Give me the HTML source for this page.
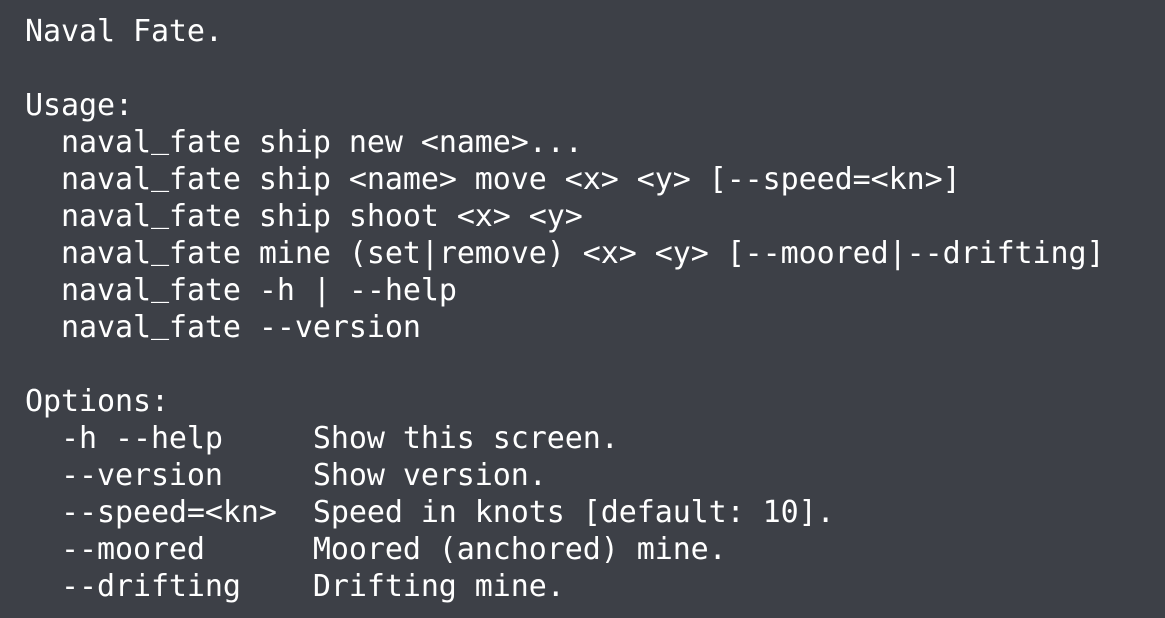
<!DOCTYPE html>
<html><head><style>
html,body{margin:0;padding:0;background:#3d4047;width:1165px;height:618px;overflow:hidden}
pre{margin:0;position:absolute;left:25px;top:13px;font-family:"DejaVu Sans Mono","Liberation Mono",monospace;font-size:30px;line-height:37px;color:#ffffff;letter-spacing:-0.07px}
.u{display:inline-block;position:relative;top:-4px;line-height:30px}
</style></head><body>
<pre>Naval Fate.

Usage:
  naval<span class="u">_</span>fate ship new &lt;name&gt;...
  naval<span class="u">_</span>fate ship &lt;name&gt; move &lt;x&gt; &lt;y&gt; [--speed=&lt;kn&gt;]
  naval<span class="u">_</span>fate ship shoot &lt;x&gt; &lt;y&gt;
  naval<span class="u">_</span>fate mine (set|remove) &lt;x&gt; &lt;y&gt; [--moored|--drifting]
  naval<span class="u">_</span>fate -h | --help
  naval<span class="u">_</span>fate --version

Options:
  -h --help     Show this screen.
  --version     Show version.
  --speed=&lt;kn&gt;  Speed in knots [default: 10].
  --moored      Moored (anchored) mine.
  --drifting    Drifting mine.</pre>
</body></html>
